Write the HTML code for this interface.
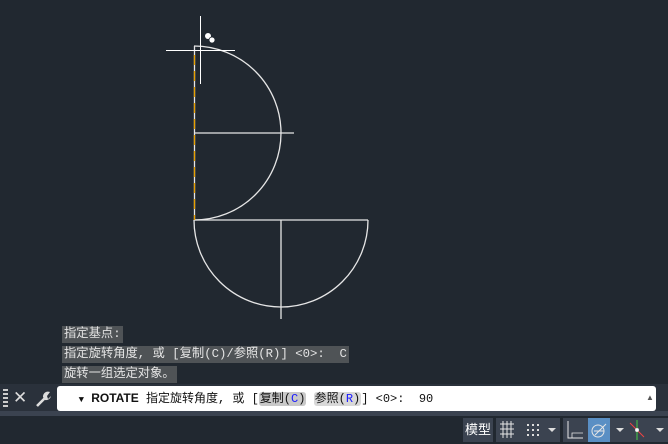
<!DOCTYPE html>
<html><head><meta charset="utf-8"><style>
body{margin:0;width:668px;height:444px;background:#212830;overflow:hidden;position:relative;font-family:"Liberation Sans","Noto Sans CJK SC",sans-serif}
.h{position:absolute;left:62px;height:17px;background:#4f5356;color:#e4e4e4;font:12.3px "Liberation Mono","Noto Sans CJK SC",monospace;line-height:17px;padding:0 2px;white-space:pre}
.cmd{position:absolute;left:57px;top:386px;width:599px;height:25px;background:#fff;border-radius:3px;font:12px "Liberation Mono","Noto Sans CJK SC",monospace;line-height:25px;color:#111;white-space:pre}
.t{background:#c8c8c8;border-radius:3px;padding:0 1px}
.sb{position:absolute;top:418px;height:24px;background:#3b4350}
</style></head><body>
<svg width="668" height="444" style="position:absolute;left:0;top:0">
<g fill="none" stroke="#e6e6e6" stroke-width="1.3">
<path d="M194 46 A87 87 0 0 1 194 220"/>
<line x1="194" y1="133" x2="294" y2="133"/>
<line x1="194" y1="220" x2="368" y2="220"/>
<path d="M194 220 A87 87 0 0 0 368 220"/>
<line x1="281" y1="220" x2="281" y2="319"/>
<line x1="194.5" y1="46" x2="194.5" y2="220"/>
</g>
<line x1="194.5" y1="55" x2="194.5" y2="220" stroke="#e8a000" stroke-width="1.3" stroke-dasharray="10,6"/>
<line x1="200.5" y1="16" x2="200.5" y2="84" stroke="#fff"/>
<line x1="166" y1="50.5" x2="235" y2="50.5" stroke="#fff"/>
<circle cx="208" cy="36" r="3" fill="#fff"/><circle cx="212" cy="40" r="3" fill="#fff" stroke="#212830" stroke-width=".8"/>
</svg>
<div class="h" style="top:326px">指定基点:</div>
<div class="h" style="top:346px">指定旋转角度, 或 [复制(C)/参照(R)] &lt;0&gt;:  C</div>
<div class="h" style="top:366px">旋转一组选定对象。</div>
<div style="position:absolute;left:0;top:384px;width:668px;height:28px;background:#2a313b"></div>
<div style="position:absolute;left:0;top:411px;width:668px;height:5px;background:#3b4350"></div>
<div style="position:absolute;left:3px;top:389px;width:5px;height:18px;background:repeating-linear-gradient(#ccc 0 2px,transparent 2px 4px);"></div>
<div style="position:absolute;left:13px;top:387px;color:#ddd;font-size:17px;line-height:22px">✕</div>
<svg style="position:absolute;left:34px;top:390px" width="18" height="18"><path d="M3 16 L11 8" stroke="#ddd" stroke-width="2.6" fill="none"/><path d="M9 7 A5 5 0 0 1 16 2 L13 6 L14 9 L17 6 A5 5 0 0 1 11 10Z" fill="#ddd"/></svg>
<div class="cmd">   <span style="font-size:9px">▼</span> <b style="font-family:'Liberation Sans'">ROTATE</b> 指定旋转角度, 或 [<span class="t">复制(<span style="color:#1a1aff">C</span>)</span> <span class="t" style="background:#d8d8d8">参照(<span style="color:#1a1aff">R</span>)</span>] &lt;0&gt;:  90</div>
<div style="position:absolute;left:646px;top:393px;font-size:8px;color:#555">▲</div>
<div class="sb" style="left:463px;width:30px;color:#fff;font-size:13px;line-height:24px;text-align:center">模型</div>
<div class="sb" style="left:496px;width:64px"></div>
<div class="sb" style="left:563px;width:105px"></div>
<div class="sb" style="left:588px;width:22px;background:#5a8fc4"></div>
<svg style="position:absolute;left:0;top:418px" width="668" height="24" fill="none" stroke="#e6e6e6">
<path d="M500 6H514M500 11H514M500 16H514M503 3V20M507 3V20M511 3V20"/>
<g fill="#ddd" stroke="none"><rect x="527" y="6" width="2" height="2"/><rect x="532" y="6" width="2" height="2"/><rect x="537" y="6" width="2" height="2"/><rect x="527" y="11" width="2" height="2"/><rect x="532" y="11" width="2" height="2"/><rect x="537" y="11" width="2" height="2"/><rect x="527" y="16" width="2" height="2"/><rect x="532" y="16" width="2" height="2"/><rect x="537" y="16" width="2" height="2"/>
<path d="M548 10h8l-4 4z"/><path d="M616 10h8l-4 4z"/><path d="M656 10h8l-4 4z"/></g>
<path d="M568 3V20H583"/><path d="M572 20V15H583" stroke-width=".8"/>
<circle cx="598" cy="13" r="6"/><path d="M595 17L606 6M594 13H604"/>
<path d="M637 2V22" stroke="#4c4"/><path d="M630 5L644 19" stroke="#e44"/><circle cx="637" cy="12" r="1.5" fill="#fff"/>
</svg>
</body></html>
